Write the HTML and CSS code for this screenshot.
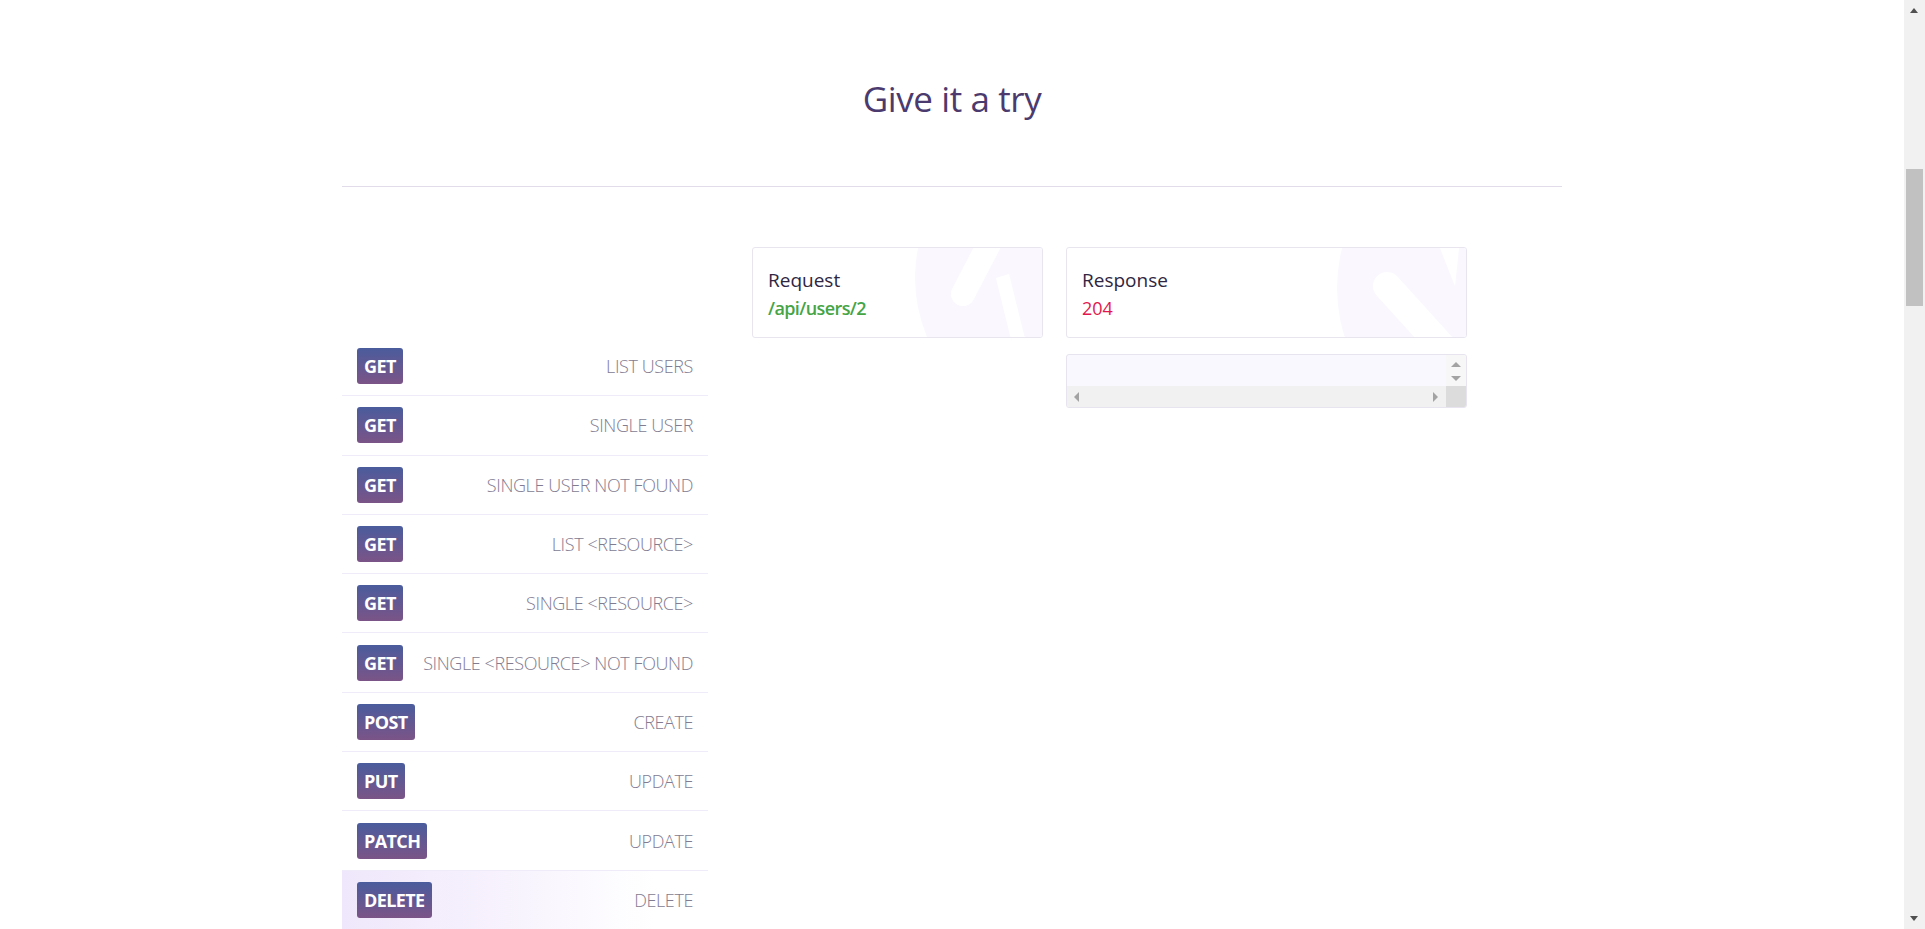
FILE: index.html
```html
<!DOCTYPE html>
<html lang="en">
<head>
<meta charset="utf-8">
<title>Give it a try</title>
<link rel="stylesheet" href="styles.css">
</head>
<body>
<div class="viewport">
  <div class="container">
    <header class="header">
      <h2 class="title">Give it a try</h2>
    </header>
    <hr class="divider">
    <main class="tryout">
      <ul class="endpoints">
        <li class="endpoint"><span class="method">GET</span><span class="label">LIST USERS</span></li>
        <li class="endpoint"><span class="method">GET</span><span class="label">SINGLE USER</span></li>
        <li class="endpoint"><span class="method">GET</span><span class="label">SINGLE USER NOT FOUND</span></li>
        <li class="endpoint"><span class="method">GET</span><span class="label">LIST &lt;RESOURCE&gt;</span></li>
        <li class="endpoint"><span class="method">GET</span><span class="label">SINGLE &lt;RESOURCE&gt;</span></li>
        <li class="endpoint"><span class="method">GET</span><span class="label">SINGLE &lt;RESOURCE&gt; NOT FOUND</span></li>
        <li class="endpoint"><span class="method">POST</span><span class="label">CREATE</span></li>
        <li class="endpoint"><span class="method">PUT</span><span class="label">UPDATE</span></li>
        <li class="endpoint"><span class="method">PATCH</span><span class="label">UPDATE</span></li>
        <li class="endpoint active"><span class="method">DELETE</span><span class="label">DELETE</span></li>
      </ul>
      <div class="panels">
        <section class="card card-request">
          <svg class="mark" viewBox="0 0 291 91" width="291" height="91" aria-hidden="true">
            <circle cx="312" cy="30" r="150" fill="#faf8fe"/>
            <line x1="210" y1="46" x2="236" y2="-4" stroke="#ffffff" stroke-width="24" stroke-linecap="round"/>
            <polygon points="243,30 258,91 272,91 256,26" fill="#ffffff"/>
          </svg>
          <div class="card-title">Request</div>
          <div class="card-value url">/api/users/2</div>
        </section>
        <div class="response-col">
          <section class="card card-response">
            <svg class="mark" viewBox="0 0 401 91" width="401" height="91" aria-hidden="true">
              <circle cx="430" cy="40" r="160" fill="#faf8fe"/>
              <line x1="320" y1="38" x2="378" y2="102" stroke="#ffffff" stroke-width="28" stroke-linecap="round"/>
              <polygon points="373,0 392,0 388,38" fill="#ffffff"/>
            </svg>
            <div class="card-title">Response</div>
            <div class="card-value status">204</div>
          </section>
          <div class="output">
            <div class="output-body"></div>
            <div class="vbar">
              <span class="arrow up"></span>
              <span class="arrow down"></span>
            </div>
            <div class="hbar">
              <span class="arrow left"></span>
              <span class="arrow right"></span>
            </div>
            <div class="corner"></div>
          </div>
        </div>
      </div>
    </main>
  </div>
</div>
<div class="page-scrollbar" aria-hidden="true">
  <span class="sb-arrow sb-up"></span>
  <span class="sb-thumb"></span>
  <span class="sb-arrow sb-down"></span>
</div>
</body>
</html>
```
FILE: styles.css
```css
* { box-sizing: border-box; }

html, body {
  margin: 0;
  padding: 0;
  height: 100%;
  overflow: hidden;
  background: #ffffff;
}

body {
  font-family: "Open Sans", "Noto Sans", "Liberation Sans", sans-serif;
  color: #2f2641;
}

.viewport {
  padding-right: 21px;
}

.container {
  width: 1220px;
  margin: 0 auto;
}

.header {
  padding-top: 77px;
}

.title {
  margin: 0;
  text-align: center;
  font-size: 35px;
  line-height: 44px;
  font-weight: 400;
  color: #4b3a6e;
  letter-spacing: -0.4px;
}

.divider {
  margin: 65px 0 0;
  border: 0;
  height: 1px;
  background: #e2dcea;
}

.tryout {
  display: flex;
  align-items: flex-start;
}

.endpoints {
  list-style: none;
  margin: 150px 0 0;
  padding: 0;
  width: 366px;
  flex: none;
}

.endpoint {
  display: flex;
  align-items: center;
  justify-content: space-between;
  height: 59.3px;
  padding: 0 15px;
  border-bottom: 1px solid #efebf8;
}

.endpoint.active {
  background: linear-gradient(90deg, #efe7fb 0%, #f6f1fd 40%, #ffffff 85%);
}

.method {
  display: inline-flex;
  align-items: center;
  height: 36px;
  padding: 0 7px;
  border-radius: 3px;
  background: linear-gradient(180deg, #4a5c9d 0%, #7b5487 100%);
  color: #ffffff;
  font-size: 18px;
  font-weight: 700;
  letter-spacing: -0.6px;
}

.label {
  font-size: 18px;
  font-weight: 300;
  color: #827c91;
  letter-spacing: -0.4px;
}

.panels {
  display: flex;
  gap: 23px;
  margin: 60px 0 0 44px;
}

.card {
  position: relative;
  overflow: hidden;
  height: 91px;
  border: 1px solid #e8e5ef;
  border-radius: 3px;
  padding: 18px 15px 0;
  background: #ffffff;
}

.card-request { width: 291px; }
.card-response { width: 401px; }

.mark {
  position: absolute;
  top: 0;
  left: 0;
  z-index: 0;
}

.card-title,
.card-value {
  position: relative;
  z-index: 1;
  line-height: 28px;
}

.card-title {
  font-size: 19px;
  color: #2f2641;
  font-weight: 400;
}

.card-value {
  font-size: 18px;
}

.url {
  color: #45a546;
  font-weight: 600;
  letter-spacing: -0.6px;
}

.status {
  color: #e2174e;
  font-weight: 400;
}

.response-col {
  display: flex;
  flex-direction: column;
  gap: 16px;
}

.output {
  display: grid;
  grid-template-columns: 1fr 20px;
  grid-template-rows: 1fr 21px;
  width: 401px;
  height: 54px;
  border: 1px solid #e7e3ef;
  border-radius: 3px;
  overflow: hidden;
  background: #faf8ff;
}

.vbar {
  background: #f7f7f7;
  display: flex;
  flex-direction: column;
  align-items: center;
  justify-content: space-around;
  padding: 3px 0 1px;
}

.hbar {
  background: #f1f1f1;
  display: flex;
  align-items: center;
  justify-content: space-between;
  padding: 0 8px 0 7px;
}

.corner {
  background: #dcdcdc;
}

.arrow {
  width: 0;
  height: 0;
  border: 5px solid transparent;
}

.arrow.up { border-bottom: 5px solid #a3a3a3; border-top-width: 0; }
.arrow.down { border-top: 5px solid #a3a3a3; border-bottom-width: 0; }
.arrow.left { border-right: 5px solid #a3a3a3; border-left-width: 0; }
.arrow.right { border-left: 5px solid #a3a3a3; border-right-width: 0; }

.page-scrollbar {
  position: fixed;
  top: 0;
  right: 0;
  width: 21px;
  height: 100%;
  background: #f1f1f1;
}

.sb-arrow {
  position: absolute;
  left: 6px;
  width: 0;
  height: 0;
  border-left: 4.5px solid transparent;
  border-right: 4.5px solid transparent;
}

.sb-up {
  top: 8px;
  border-bottom: 5px solid #505050;
}

.sb-down {
  bottom: 8px;
  border-top: 5px solid #505050;
}

.sb-thumb {
  position: absolute;
  top: 169px;
  left: 2px;
  width: 17px;
  height: 137px;
  background: #c1c1c1;
}
```
